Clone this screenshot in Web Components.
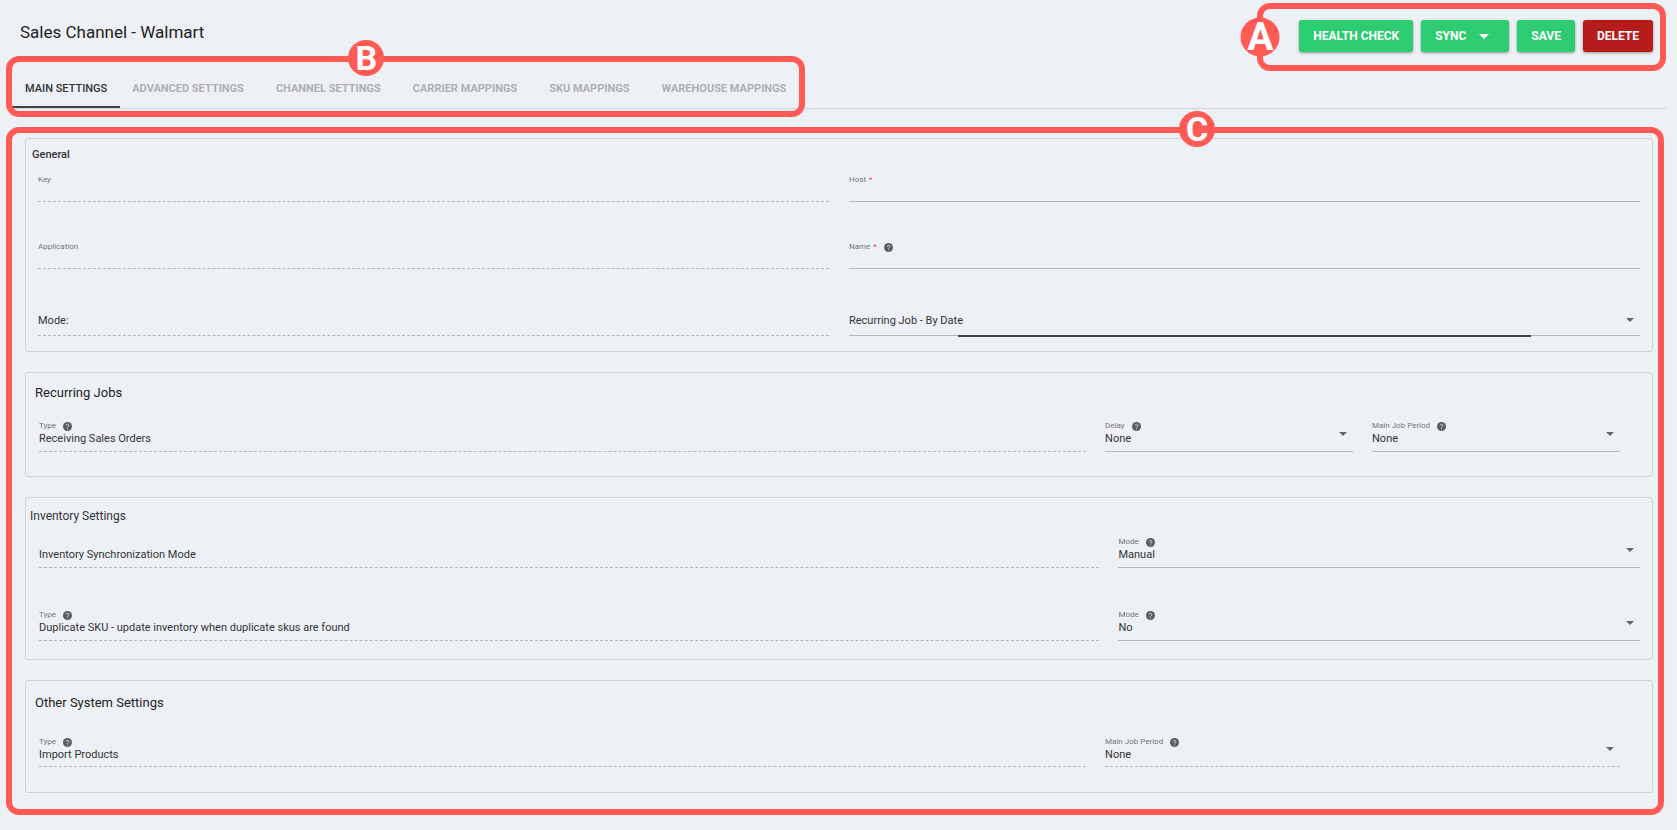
<!DOCTYPE html>
<html lang="en">
<head>
<meta charset="utf-8">
<title>Sales Channel - Walmart</title>
<style>
  body {
    margin: 0;
    background: #edf1f6;
    color: #212121;
    font-family: Roboto, "Liberation Sans", sans-serif;
  }
</style>
</head>
<body>
<sales-channel-page></sales-channel-page>

<script>
const HELP_ICON = `
  <svg class="help" viewBox="0 0 24 24" aria-hidden="true">
    <circle cx="12" cy="12" r="12" fill="#5c5c5c"/>
    <path d="M8.500 9.500a3.500 3.500 0 1 1 5.500 2.900c-1.300.9-2 1.500-2 2.800" fill="none" stroke="#dfe2e6" stroke-width="2.500"/>
    <circle cx="12" cy="18.500" r="1.500" fill="#dfe2e6"/>
  </svg>
`

const FIELD_STYLES = `
  :host {
    --underline-gap: 5px;
    --underline: 1px solid #b3b6ba;
    display: block;
    position: relative;
    min-width: 0;
  }
  :host([spacing="tight"]) { --underline-gap: 1px; }
  :host([spacing="loose"]) { --underline-gap: 7px; }
  :host([locked]) { --underline: 1px dashed #b3b6ba; }

  label {
    display: flex;
    align-items: center;
    font-size: 8px;
    line-height: 12px;
    color: #757575;
  }
  .required {
    margin-left: 3px;
    color: #f44336;
  }
  .help {
    width: 9px;
    height: 9px;
    margin-left: 7px;
  }
  input,
  select {
    display: block;
    box-sizing: content-box;
    width: 100%;
    height: 14px;
    margin: 0;
    padding: 0 0 var(--underline-gap);
    appearance: none;
    background: none;
    border: 0;
    border-bottom: var(--underline);
    border-radius: 0;
    outline: none;
    font-family: inherit;
    font-size: 11px;
    line-height: 14px;
    color: #333;
  }
`

class BaseField extends HTMLElement {
  constructor() {
    super()
    this.attachShadow({ mode: 'open' })
  }

  connectedCallback() {
    const template = document.createElement('template')
    template.innerHTML = `<style>${FIELD_STYLES}</style>${this.labelMarkup}${this.controlMarkup}`
    this.shadowRoot.replaceChildren(template.content.cloneNode(true))
  }

  get name() {
    return this.getAttribute('name') || ''
  }
  get value() {
    return this.getAttribute('value') || ''
  }

  get labelMarkup() {
    const label = this.getAttribute('label')
    if (!label) return ''
    const required = this.hasAttribute('required') ? '<span class="required">*</span>' : ''
    const help = this.hasAttribute('help') ? HELP_ICON : ''
    return `<label for="control"><span>${label}</span>${required}${help}</label>`
  }

  // fields without a visible label still need a name
  get aria() {
    return this.name ? `aria-label="${this.name}"` : ''
  }
}

customElements.define(
  'text-field',
  class TextField extends BaseField {
    get controlMarkup() {
      const readonly = this.hasAttribute('locked') ? 'readonly' : ''
      return `<input id="control" type="text" value="${this.value}" ${this.aria} ${readonly}>`
    }
  }
)

customElements.define(
  'select-field',
  class SelectField extends BaseField {
    get controlMarkup() {
      const options = this.getAttribute('options').split('|')
      return `
        <style>
          .arrow {
            position: absolute;
            right: 6px;
            bottom: 16px;
            border: 4px solid transparent;
            border-top-color: #666;
            border-bottom: 0;
            pointer-events: none;
          }
          :host([spacing="loose"]) .arrow { bottom: 14px; }
          .focus {
            display: none;
            position: absolute;
            left: 109px;
            right: 109px;
            bottom: -1px;
            height: 2px;
            background: #424242;
          }
          :host([focused]) .focus { display: block; }
        </style>
        <select id="control" ${this.aria}>
          ${options.map(option => `<option>${option}</option>`).join('')}
        </select>
        <span class="arrow"></span>
        <span class="focus"></span>
      `
    }
  }
)

customElements.define(
  'settings-panel',
  class SettingsPanel extends HTMLElement {
    constructor() {
      super()
      this.attachShadow({ mode: 'open' })
      this.shadowRoot.innerHTML = `
        <style>
          :host {
            display: block;
            border: 1px solid #d0d3d8;
            border-radius: 3px;
          }
          h2 {
            margin: 0;
            padding-left: var(--title-indent);
            color: var(--title-color, #212121);
            font-size: var(--title-size);
            font-weight: var(--title-weight, 400);
            line-height: 16px;
          }
          .rows {
            padding: 0 var(--end, 12px) 0 var(--start, 13px);
          }
        </style>
        <section>
          <h2><slot name="title"></slot></h2>
          <div class="rows"><slot></slot></div>
        </section>
      `
    }
  }
)

customElements.define(
  'action-button',
  class ActionButton extends HTMLElement {
    constructor() {
      super()
      this.attachShadow({ mode: 'open' })
      this.shadowRoot.innerHTML = `
        <style>
          :host { display: block; }
          button {
            display: flex;
            align-items: center;
            gap: 13px;
            height: 32px;
            padding: 0 14px;
            border: 0;
            border-radius: 3px;
            background: #2ecc71;
            box-shadow: 0 1px 3px rgba(0, 0, 0, 0.4);
            color: #fff;
            font-family: inherit;
            font-size: 12px;
            font-weight: 700;
            line-height: 16px;
            cursor: pointer;
          }
          :host([danger]) button { background: #b71c1c; }
          .arrow { display: none; }
          :host([menu]) .arrow {
            display: block;
            margin-right: 6px;
            border: 5px solid transparent;
            border-top-color: #fff;
            border-bottom: 0;
          }
        </style>
        <button type="button"><slot></slot><span class="arrow"></span></button>
      `
    }
  }
)

customElements.define(
  'tab-item',
  class TabItem extends HTMLElement {
    constructor() {
      super()
      this.attachShadow({ mode: 'open' })
      this.shadowRoot.innerHTML = `
        <style>
          :host { display: block; }
          button {
            height: 40px;
            padding: 3px 16px 0;
            border: 0;
            border-bottom: 2px solid transparent;
            background: none;
            color: #b0b0b0;
            font-family: inherit;
            font-size: 11px;
            font-weight: 700;
            line-height: 16px;
            white-space: nowrap;
            cursor: pointer;
          }
          :host([active]) { margin-right: -4px; }
          :host([active]) button {
            padding: 3px 13px 0;
            border-bottom-color: #424242;
            color: #333;
            font-weight: 500;
          }
        </style>
        <button type="button" role="tab" aria-selected="${this.hasAttribute('active')}"><slot></slot></button>
      `
    }
  }
)

// Red ring with a lettered badge, drawn round whatever is slotted in
customElements.define(
  'callout-ring',
  class CalloutRing extends HTMLElement {
    constructor() {
      super()
      this.attachShadow({ mode: 'open' })
      this.shadowRoot.innerHTML = `
        <style>
          :host {
            display: block;
            position: relative;
          }
          .ring {
            position: absolute;
            inset: var(--ring-inset);
            border: 6px solid #ff5a54;
            border-radius: 13px;
            pointer-events: none;
          }
          .badge {
            position: absolute;
            left: var(--badge-left);
            top: var(--badge-top);
            width: var(--badge-size, 36px);
            height: var(--badge-size, 36px);
            transform: translate(-50%, -50%);
            border-radius: 50%;
            background: #ff5a54;
            color: #fff;
            font-size: var(--badge-font, 34px);
            font-weight: 700;
            line-height: var(--badge-size, 36px);
            text-align: center;
          }
        </style>
        <slot></slot>
        <div class="ring"><span class="badge">${this.getAttribute('letter')}</span></div>
      `
    }
  }
)

customElements.define(
  'sales-channel-page',
  class SalesChannelPage extends HTMLElement {
    constructor() {
      super()
      this.attachShadow({ mode: 'open' })
      const template = document.createElement('template')
      template.innerHTML = `
        <style>
          :host { display: block; }

          header {
            display: flex;
            justify-content: space-between;
            padding: 20px 24px 16px 20px;
          }
          h1 {
            margin: 0;
            font-size: 17px;
            font-weight: 400;
            line-height: 24px;
          }
          .actions {
            display: flex;
            gap: 8px;
          }
          .tab-bar {
            display: flex;
            margin: 0 11px 0 12px;
            border-bottom: 1px solid #d0d3d8;
          }
          .tabs { display: flex; }
          main { margin: 29px 24px 37px 25px; }
          .panels {
            display: grid;
            gap: 20px;
          }

          /* Rings */
          .ring-actions {
            --ring-inset: -17px -13px -19px -42px;
            --badge-left: -3px;
            --badge-top: 50%;
            --badge-size: 39px;
            --badge-font: 39px;
          }
          .ring-tabs {
            --ring-inset: -12px -3px -9px -6px;
            --badge-left: 45%;
            --badge-top: -4px;
          }
          .ring-panels {
            --ring-inset: -11px -11px -22px -19px;
            --badge-left: 72%;
            --badge-top: -4px;
          }

          /* Panels */
          .row {
            display: grid;
            align-items: end;
            gap: 19px;
          }
          .general {
            --title-indent: 6px;
            --title-size: 11px;
            --title-weight: 500;
            --title-color: #333;
            --start: 12px;
            padding: 8px 0 15px;
          }
          .general .row {
            grid-template-columns: 1fr 1fr;
            gap: 20px;
            height: 67px;
          }
          .general .row:first-of-type { height: 39px; }

          .recurring {
            --title-indent: 9px;
            --title-size: 13px;
            --end: 32px;
            padding: 12px 0 24px;
          }
          .recurring .row {
            grid-template-columns: 38fr 9fr 9fr;
            height: 51px;
          }

          .inventory {
            --title-indent: 4px;
            --title-size: 12px;
            --title-color: #333;
            padding: 10px 0 18px;
          }
          .inventory .row {
            grid-template-columns: 61fr 30fr;
            height: 73px;
          }
          .inventory .row:first-of-type { height: 44px; }

          .other {
            --title-indent: 9px;
            --title-size: 13px;
            --end: 32px;
            padding: 14px 0 25px;
          }
          .other .row {
            grid-template-columns: 61fr 30fr;
            height: 56px;
          }
          .other .row > * { --underline-gap: 4px; }
        </style>

        <header>
          <h1>Sales Channel - Walmart</h1>
          <callout-ring class="ring-actions" letter="A">
            <div class="actions">
              <action-button>HEALTH CHECK</action-button>
              <action-button menu>SYNC</action-button>
              <action-button>SAVE</action-button>
              <action-button danger>DELETE</action-button>
            </div>
          </callout-ring>
        </header>

        <nav class="tab-bar">
          <callout-ring class="ring-tabs" letter="B">
            <div class="tabs" role="tablist">
              <tab-item active>MAIN SETTINGS</tab-item>
              <tab-item>ADVANCED SETTINGS</tab-item>
              <tab-item>CHANNEL SETTINGS</tab-item>
              <tab-item>CARRIER MAPPINGS</tab-item>
              <tab-item>SKU MAPPINGS</tab-item>
              <tab-item>WAREHOUSE MAPPINGS</tab-item>
            </div>
          </callout-ring>
        </nav>

        <main>
          <callout-ring class="ring-panels" letter="C">
            <div class="panels">
              <settings-panel class="general">
                <span slot="title">General</span>
                <div class="row">
                  <text-field label="Key" spacing="tight" locked></text-field>
                  <text-field label="Host" spacing="tight" required></text-field>
                </div>
                <div class="row">
                  <text-field label="Application" spacing="tight" locked></text-field>
                  <text-field label="Name" spacing="tight" required help></text-field>
                </div>
                <div class="row">
                  <text-field name="Mode" value="Mode:" spacing="loose" locked></text-field>
                  <select-field name="Mode" options="Recurring Job - By Date" spacing="loose" focused></select-field>
                </div>
              </settings-panel>

              <settings-panel class="recurring">
                <span slot="title">Recurring Jobs</span>
                <div class="row">
                  <text-field label="Type" value="Receiving Sales Orders" help locked></text-field>
                  <select-field label="Delay" options="None" help></select-field>
                  <select-field label="Main Job Period" options="None" help></select-field>
                </div>
              </settings-panel>

              <settings-panel class="inventory">
                <span slot="title">Inventory Settings</span>
                <div class="row">
                  <text-field name="Setting" value="Inventory Synchronization Mode" locked></text-field>
                  <select-field label="Mode" options="Manual|Automatic" help></select-field>
                </div>
                <div class="row">
                  <text-field label="Type" value="Duplicate SKU - update inventory when duplicate skus are found" help locked></text-field>
                  <select-field label="Mode" options="No|Yes" help></select-field>
                </div>
              </settings-panel>

              <settings-panel class="other">
                <span slot="title">Other System Settings</span>
                <div class="row">
                  <text-field label="Type" value="Import Products" help locked></text-field>
                  <select-field label="Main Job Period" options="None" help locked></select-field>
                </div>
              </settings-panel>
            </div>
          </callout-ring>
        </main>
      `
      this.shadowRoot.appendChild(template.content.cloneNode(true))
    }
  }
)
</script>
</body>
</html>
